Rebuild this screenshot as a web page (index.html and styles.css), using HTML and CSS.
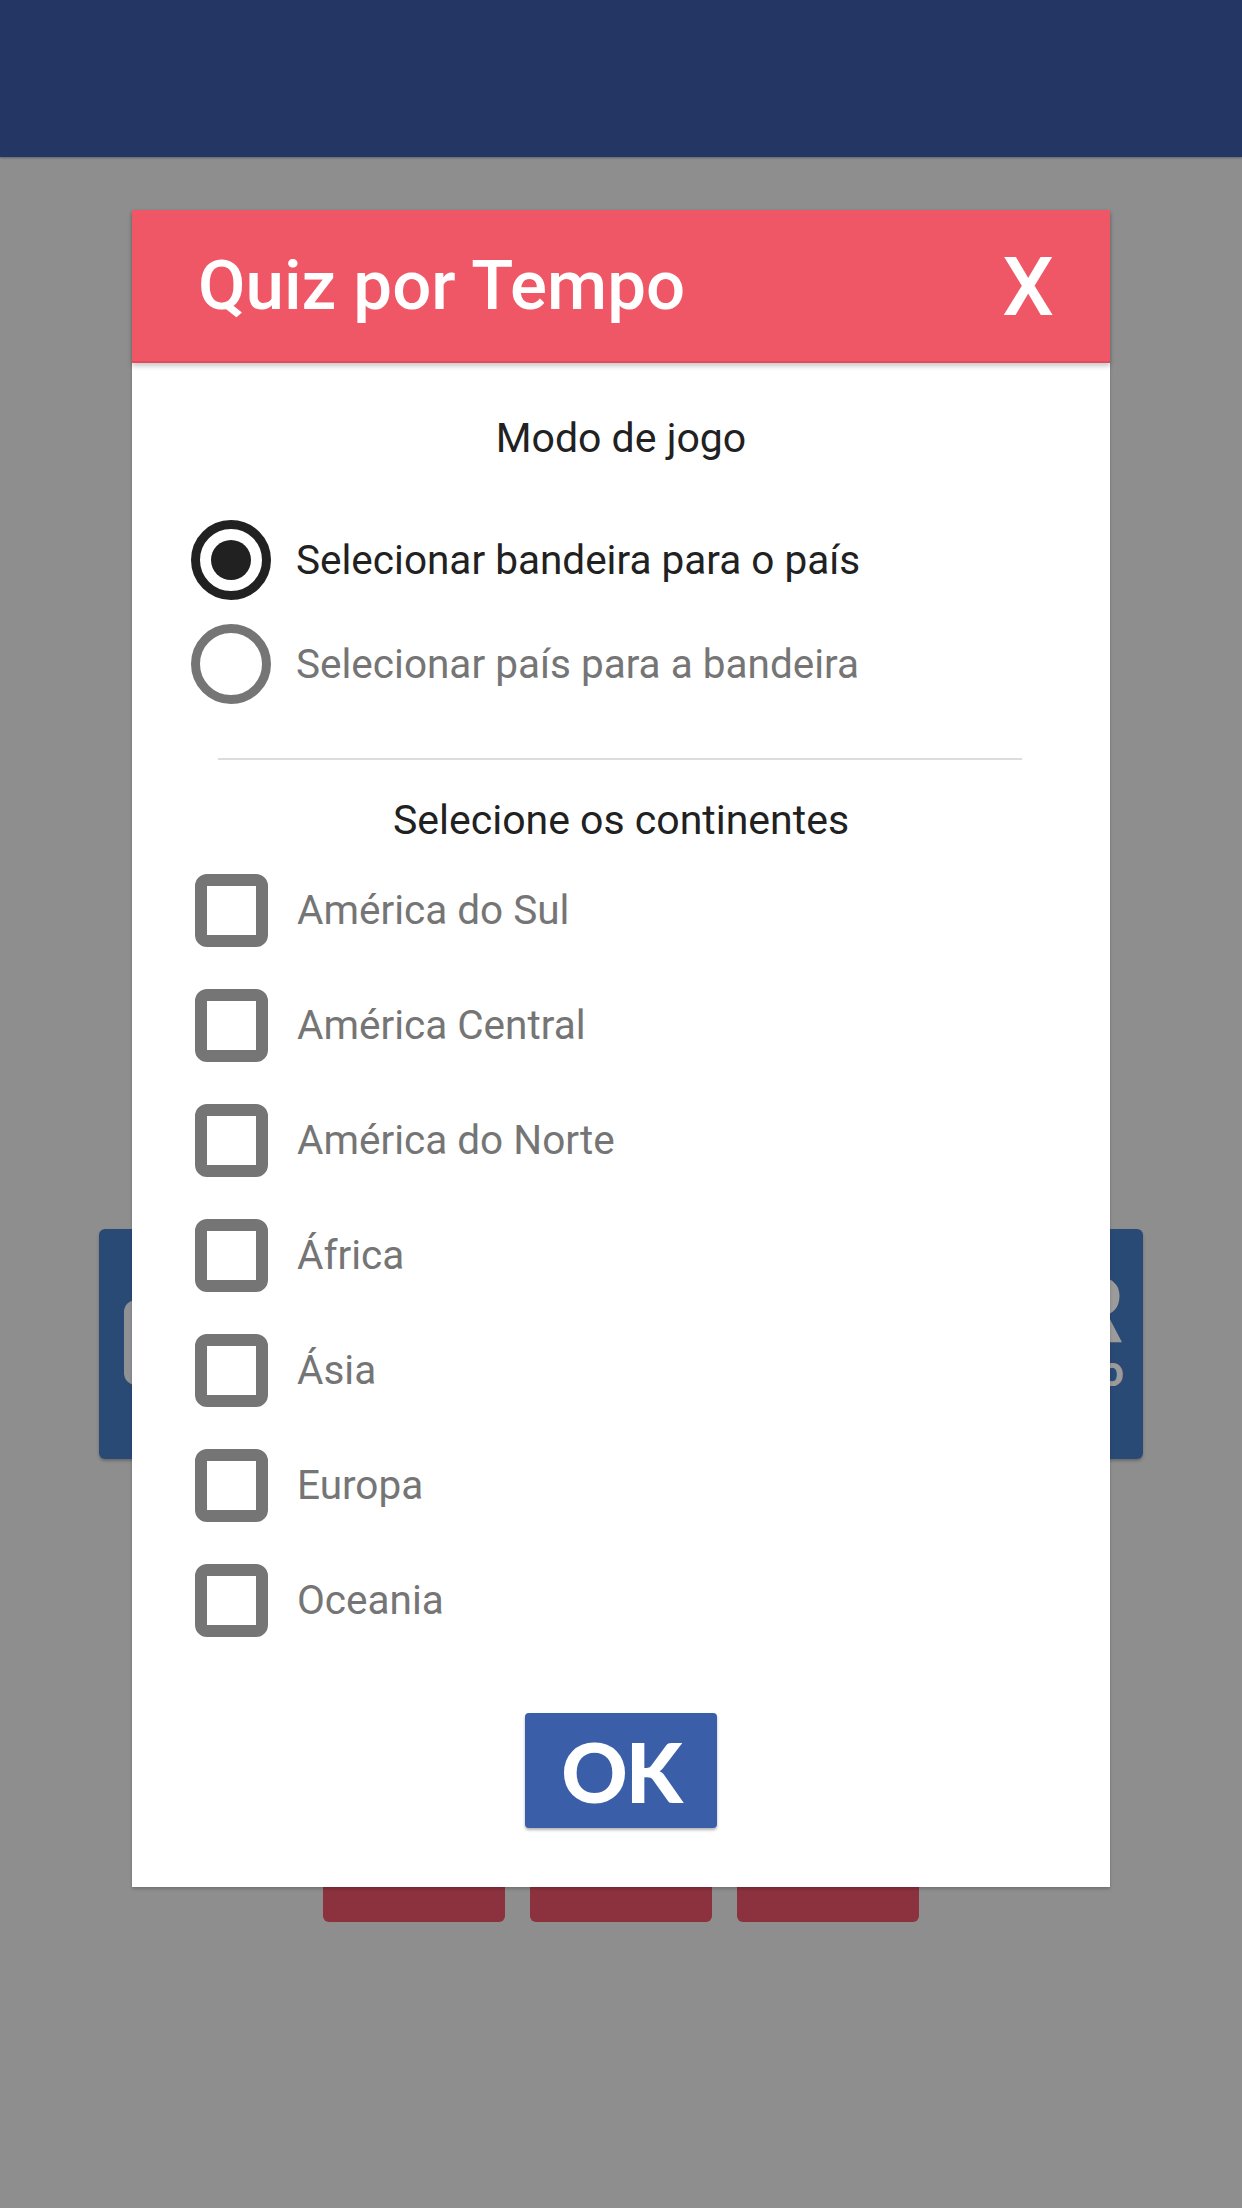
FILE: index.html
```html
<!DOCTYPE html>
<html lang="pt">
<head>
  <meta charset="UTF-8">
  <meta name="viewport" content="width=device-width, initial-scale=1.0">
  <title>Quiz por Tempo</title>
  <link rel="stylesheet" href="styles.css">
</head>
<body>
  <header class="topbar"></header>

  <main class="screen">
    <div class="mode-card">
      <div class="mode-pill"></div>
      <div class="mode-label">
        <span class="mode-big">JOGAR</span>
        <span class="mode-small">por tempo</span>
      </div>
    </div>
    <div class="level-row">
      <div class="level-btn"></div>
      <div class="level-btn"></div>
      <div class="level-btn"></div>
    </div>
  </main>

  <div class="dialog">
    <div class="dialog-header">
      <h1>Quiz por Tempo</h1>
      <span class="close">X</span>
    </div>

    <div class="dialog-body">
      <h2 class="group-title title-mode">Modo de jogo</h2>
      <label class="option checked">
        <span class="radio"></span>
        <span>Selecionar bandeira para o país</span>
      </label>
      <label class="option">
        <span class="radio"></span>
        <span>Selecionar país para a bandeira</span>
      </label>

      <hr class="divider">

      <h2 class="group-title">Selecione os continentes</h2>
      <label class="check-row"><span class="box"></span><span>América do Sul</span></label>
      <label class="check-row"><span class="box"></span><span>América Central</span></label>
      <label class="check-row"><span class="box"></span><span>América do Norte</span></label>
      <label class="check-row"><span class="box"></span><span>África</span></label>
      <label class="check-row"><span class="box"></span><span>Ásia</span></label>
      <label class="check-row"><span class="box"></span><span>Europa</span></label>
      <label class="check-row"><span class="box"></span><span>Oceania</span></label>

      <div class="actions">
        <button class="ok-btn">OK</button>
      </div>
    </div>
  </div>
</body>
</html>
```
FILE: styles.css
```css
body {
  font-family: Roboto, "Noto Sans", sans-serif;
  background: #8e8e8e;
  margin: 0;
  width: 1242px;
  height: 2208px;
  position: relative;
  overflow: hidden;
}
.topbar {
  height: 157px;
  background: #243764;
  box-shadow: 0 1px 2px rgba(0,0,0,0.3);
}
.screen {
  padding-top: 1072px;
}
.mode-card {
  margin-left: 99px;
  width: 1044px;
  height: 230px;
  background: #2a4a76;
  border-radius: 6px;
  box-shadow: 0 2px 3px rgba(0,0,0,0.25);
  display: flex;
  justify-content: space-between;
  box-sizing: border-box;
  padding: 42px 19px 0 25px;
}
.mode-pill {
  width: 300px;
  height: 85px;
  margin-top: 29px;
  background: #909194;
  border-radius: 12px;
}
.mode-label {
  display: flex;
  flex-direction: column;
  align-items: flex-end;
  color: #9b9b9b;
  font-weight: 700;
}
.mode-big {
  font-size: 93px;
  line-height: 80px;
}
.mode-small {
  font-size: 42px;
  line-height: 42px;
}
.level-row {
  display: flex;
  justify-content: center;
  gap: 25px;
  margin-top: 373px;
}
.level-btn {
  width: 182px;
  height: 90px;
  background: #8c323e;
  border-radius: 6px;
}

.dialog {
  position: absolute;
  left: 132px;
  top: 210px;
  width: 978px;
  height: 1677px;
  background: #fff;
  box-shadow: 0 2px 3px rgba(0,0,0,0.2);
}
.dialog-header {
  height: 153px;
  background: #ef5766;
  border-bottom: 2px solid #e14b5a;
  box-sizing: border-box;
  display: flex;
  align-items: center;
  justify-content: space-between;
  padding: 0 56px 0 66px;
  color: #fff;
  box-shadow: 0 3px 5px rgba(0,0,0,0.22);
  position: relative;
}
.dialog-header h1 {
  margin: 0;
  font-size: 69px;
  font-weight: 500;
}
.close {
  font-size: 82px;
  font-weight: 500;
  margin-top: 2px;
}
.dialog-body {
  display: flex;
  flex-direction: column;
  font-size: 40.5px;
  line-height: 45px;
}
.group-title {
  margin: 38px 0 10px;
  text-align: center;
  font-size: 41px;
  font-weight: 400;
  line-height: 45px;
  color: #212121;
}
.title-mode {
  margin: 53px 0 47px;
}
.option {
  height: 104px;
  display: flex;
  align-items: center;
  gap: 25px;
  padding-left: 59px;
  color: #757575;
}
.radio {
  width: 80px;
  height: 80px;
  box-sizing: border-box;
  border: 9px solid #757575;
  border-radius: 50%;
  display: flex;
  align-items: center;
  justify-content: center;
}
.option.checked {
  color: #212121;
}
.option.checked .radio {
  border-color: #212121;
}
.option.checked .radio::after {
  content: "";
  width: 40px;
  height: 40px;
  border-radius: 50%;
  background: #212121;
}
.divider {
  border: none;
  height: 2px;
  background: #dcdcdc;
  margin: 42px 88px 0 86px;
}
.check-row {
  height: 115px;
  display: flex;
  align-items: center;
  gap: 29px;
  padding-left: 63px;
  color: #757575;
}
.box {
  width: 73px;
  height: 73px;
  box-sizing: border-box;
  border: 12px solid #757575;
  border-radius: 12px;
}
.actions {
  display: flex;
  justify-content: center;
  margin-top: 55px;
}
.ok-btn {
  width: 192px;
  height: 115px;
  border: none;
  border-radius: 4px;
  background: #3a5ea8;
  color: #fff;
  font-family: Lato, "Open Sans", sans-serif;
  font-weight: 900;
  font-size: 82px;
  letter-spacing: -2px;
  line-height: 1;
  padding: 0;
  box-shadow: 0 2px 3px rgba(0,0,0,0.3);
}
```
